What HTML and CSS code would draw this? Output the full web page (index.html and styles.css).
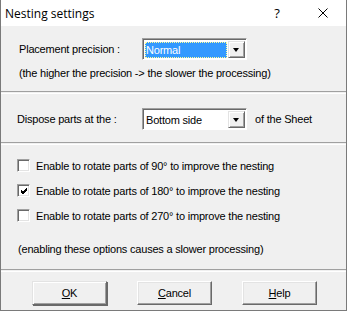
FILE: index.html
```html
<!DOCTYPE html>
<html>
<head>
<meta charset="utf-8">
<link rel="stylesheet" href="styles.css">
</head>
<body>
<div class="window">
  <div class="titlebar">
    <span class="title">Nesting settings</span>
    <span class="help-btn">?</span>
    <span class="close-btn">
      <svg width="10" height="10" viewBox="0 0 10 10"><path d="M0.5 0.5L9.5 9.5M9.5 0.5L0.5 9.5" stroke="#000" stroke-width="1" fill="none"/></svg>
    </span>
  </div>
  <div class="body">
    <div class="section s1">
      <div class="row">
        <span class="label l1">Placement precision :</span>
        <div class="combo">
          <div class="combo-value selected"><span>Normal</span></div>
          <div class="combo-btn"><span class="arrow"></span></div>
        </div>
      </div>
      <div class="note">(the higher the precision -&gt; the slower the processing)</div>
    </div>
    <div class="sep"></div>
    <div class="section s2">
      <div class="row">
        <span class="label l2">Dispose parts at the :</span>
        <div class="combo">
          <div class="combo-value"><span>Bottom side</span></div>
          <div class="combo-btn"><span class="arrow"></span></div>
        </div>
        <span class="after">of the Sheet</span>
      </div>
    </div>
    <div class="sep"></div>
    <div class="section s3">
      <div class="check-row"><span class="box"></span><span>Enable to rotate parts of 90° to improve the nesting</span></div>
      <div class="check-row"><span class="box"><svg width="9" height="9" viewBox="0 0 9 9"><path d="M1 4L3 6L7 2M1 5L3 7L7 3M1 3L3 5L7 1" stroke="#000" stroke-width="1" fill="none"/></svg></span><span>Enable to rotate parts of 180° to improve the nesting</span></div>
      <div class="check-row"><span class="box"></span><span>Enable to rotate parts of 270° to improve the nesting</span></div>
      <div class="note2">(enabling these options causes a slower processing)</div>
    </div>
    <div class="sep"></div>
    <div class="buttons">
      <button class="btn default"><u>O</u>K</button>
      <button class="btn"><u>C</u>ancel</button>
      <button class="btn"><u>H</u>elp</button>
    </div>
  </div>
</div>
</body>
</html>
```

FILE: styles.css
```css
html, body {
  margin: 0;
  padding: 0;
  background: #f0f0f0;
}
.window {
  width: 347px;
  height: 311px;
  box-sizing: border-box;
  border-left: 1px solid #7a7a7a;
  border-right: 1px solid #7a7a7a;
  border-bottom: 1px solid #7a7a7a;
  display: flex;
  flex-direction: column;
  font-family: "Liberation Sans", Arial, sans-serif;
  font-size: 11px;
  letter-spacing: -0.2px;
  color: #000;
}
.titlebar {
  height: 26px;
  background: #fff;
  display: flex;
  align-items: center;
  flex: none;
  letter-spacing: 0;
}
.title {
  font-family: "Open Sans", "Noto Sans", sans-serif;
  font-size: 12px;
  margin-left: 4px;
  flex: 1;
}
.help-btn {
  font-family: "Open Sans", "Noto Sans", sans-serif;
  font-size: 13px;
  width: 46px;
  text-align: center;
  margin-right: 0;
}
.close-btn {
  width: 46px;
  display: flex;
  justify-content: center;
  align-items: center;
}
.body {
  flex: 1;
  display: flex;
  flex-direction: column;
  background: #f0f0f0;
}
.section {
  box-sizing: border-box;
}
.s1 {
  height: 65px;
  padding: 12px 0 0 18px;
}
.s2 {
  height: 48px;
  padding: 14px 0 0 16px;
}
.s3 {
  height: 124px;
  padding: 8px 0 0 16px;
}
.sep {
  height: 1px;
  border-top: 1px solid #a0a0a0;
  border-bottom: 1px solid #fff;
  flex: none;
}
.row {
  display: flex;
  align-items: center;
  height: 22px;
}
.l1 { width: 123px; }
.l2 { width: 125px; }
.combo {
  width: 105px;
  height: 22px;
  box-sizing: border-box;
  border-top: 1px solid #a0a0a0;
  border-left: 1px solid #a0a0a0;
  border-right: 1px solid #fff;
  border-bottom: 1px solid #fff;
  display: flex;
}
.combo-value {
  flex: 1;
  background: #fff;
  border-top: 1px solid #696969;
  border-left: 1px solid #696969;
  display: flex;
  align-items: center;
  padding: 1px 1px 1px 1px;
}
.combo-value span {
  display: flex;
  align-items: center;
  height: 16px;
  flex: 1;
  padding-left: 1px;
}
.combo-value.selected span {
  background: #3399ff;
  color: #fff;
  outline: 1px dotted #ffff99;
  outline-offset: -1px;
}
.combo-btn {
  width: 17px;
  background: #fff;
  border-top: 1px solid #696969;
  display: flex;
  padding: 1px 1px 1px 0;
}
.combo-btn .arrow {
  flex: 1;
  background: #f0f0f0;
  border-top: 1px solid #e3e3e3;
  border-left: 1px solid #e3e3e3;
  border-right: 1px solid #696969;
  border-bottom: 1px solid #696969;
  box-shadow: inset 1px 1px 0 #fff, inset -1px -1px 0 #a0a0a0;
  position: relative;
}
.combo-btn .arrow::after {
  content: "";
  position: absolute;
  left: 4px;
  top: 6px;
  border-left: 3.5px solid transparent;
  border-right: 3.5px solid transparent;
  border-top: 4px solid #000;
}
.after { margin-left: 8px; }
.note {
  margin-top: 7px;
  line-height: 13px;
}
.check-row {
  height: 25px;
  display: flex;
  align-items: center;
}
.box {
  width: 13px;
  height: 13px;
  box-sizing: border-box;
  background: #fff;
  border-top: 1px solid #a0a0a0;
  border-left: 1px solid #a0a0a0;
  border-right: 1px solid #fff;
  border-bottom: 1px solid #fff;
  box-shadow: inset 1px 1px 0 #696969, inset -1px -1px 0 #e3e3e3;
  margin-right: 6px;
  display: flex;
  align-items: center;
  justify-content: center;
}
.box svg { margin-left: 1px; margin-top: 1px; }
.note2 {
  margin-top: 15px;
  margin-left: 1px;
  line-height: 13px;
}
.buttons {
  flex: 1;
  display: flex;
  padding: 9px 0 0 31px;
  gap: 30px;
  align-items: flex-start;
}
.btn {
  width: 75px;
  height: 24px;
  box-sizing: border-box;
  background: #f0f0f0;
  font-family: "Liberation Sans", Arial, sans-serif;
  font-size: 11px;
  letter-spacing: -0.2px;
  color: #000;
  padding: 0;
  border-top: 1px solid #fff;
  border-left: 1px solid #fff;
  border-right: 1px solid #696969;
  border-bottom: 1px solid #696969;
  box-shadow: inset -1px -1px 0 #a0a0a0, inset 1px 1px 0 #e3e3e3;
}
.btn.default {
  border-top-color: #e3e3e3;
  border-left-color: #e3e3e3;
  box-shadow: inset 1px 1px 0 #fff, inset -1px -1px 0 #a0a0a0, 1px 1px 0 #696969;
}
```
